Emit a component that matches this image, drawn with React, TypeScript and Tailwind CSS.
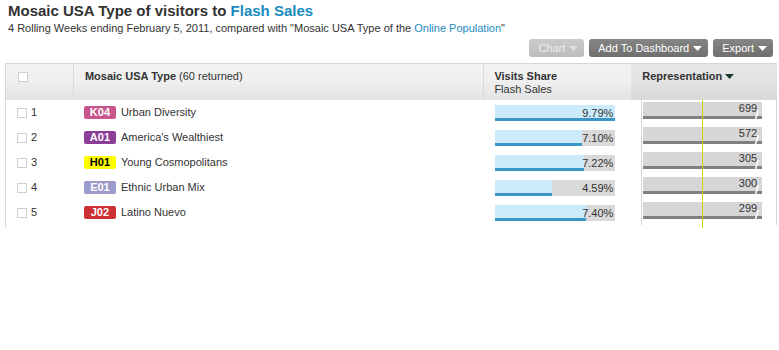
const rows = [
  { n: 1, code: "K04", name: "Urban Diversity", badge: "bg-[#c9568d] text-white", visits: 9.79, rep: 699 },
  { n: 2, code: "A01", name: "America's Wealthiest", badge: "bg-[#8c3d98] text-white", visits: 7.1, rep: 572 },
  { n: 3, code: "H01", name: "Young Cosmopolitans", badge: "bg-[#ffff00] text-black", visits: 7.22, rep: 305 },
  { n: 4, code: "E01", name: "Ethnic Urban Mix", badge: "bg-[#9b9acb] text-white", visits: 4.59, rep: 300 },
  { n: 5, code: "J02", name: "Latino Nuevo", badge: "bg-[#cc2f34] text-white", visits: 7.4, rep: 299 },
];

const maxVisits = 9.79;

function Caret({ className }: { className?: string }) {
  return (
    <svg width="9" height="5" viewBox="0 0 9 5" className={className}>
      <path d="M0 0h9L4.5 5z" fill="currentColor" />
    </svg>
  );
}

function Checkbox() {
  return <span className="inline-block w-[10px] h-[10px] border border-[#cfcfcf] bg-white" />;
}

function Button({ label, disabled }: { label: string; disabled?: boolean }) {
  return (
    <div
      className={
        "h-[18px] pl-[9px] pr-[6px] rounded-[3px] flex items-center gap-[4px] text-[11px] " +
        (disabled
          ? "bg-gradient-to-b from-[#cacaca] to-[#bdbdbd] text-[#ececec]"
          : "bg-gradient-to-b from-[#858585] to-[#6f6f6f] text-white")
      }
    >
      <span>{label}</span>
      <Caret className={disabled ? "text-[#dedede]" : "text-white"} />
    </div>
  );
}

export default function App() {
  return (
    <div className="w-[779px] h-[350px] bg-white text-[#333] font-['Liberation_Sans',Arial,sans-serif]">
      <div className="pl-2 pt-[2px] text-[15px] leading-[18px] font-bold text-[#333]">
        Mosaic USA Type of visitors to <span className="text-[#1a8bc0]">Flash Sales</span>
      </div>
      <div className="pl-2 text-[11px] leading-[14px] mt-[1px]">
        4 Rolling Weeks ending February 5, 2011, compared with "Mosaic USA Type of the{" "}
        <span className="text-[#1a8bc0]">Online Population</span>"
      </div>

      <div className="flex justify-end gap-[5px] pr-[6px] mt-[4px]">
        <Button label="Chart" disabled />
        <Button label="Add To Dashboard" />
        <Button label="Export" />
      </div>

      <div className="ml-[5px] w-[772px] mt-[6px]">
        {/* header */}
        <div className="flex h-[37px] border-t border-l border-[#d6d6d6] text-[11px] leading-[13px]">
          <div className="w-[68px] border-r border-[#dadada] bg-gradient-to-b from-[#f2f2f2] via-[#efefef] to-[#e3e3e3] pl-[12px] pt-[8px]">
            <Checkbox />
          </div>
          <div className="w-[411px] border-r border-[#dadada] bg-gradient-to-b from-[#f2f2f2] via-[#efefef] to-[#e3e3e3] pl-[11px] pt-[6px]">
            <span className="font-bold">Mosaic USA Type</span> (60 returned)
          </div>
          <div className="w-[147px] bg-gradient-to-b from-[#f2f2f2] via-[#efefef] to-[#e3e3e3] pl-[10px] pt-[6px]">
            <div className="font-bold">Visits Share</div>
            <div>Flash Sales</div>
          </div>
          <div className="w-[146px] bg-gradient-to-b from-[#e6e6e6] via-[#e3e3e3] to-[#d9d9d9] pl-[11px] pt-[6px] flex items-start gap-[3px]">
            <span className="font-bold">Representation</span>
            <Caret className="text-[#1d3b2c] mt-[4px]" />
          </div>
        </div>

        {/* rows */}
        <div className="relative border-l border-[#d6d6d6] pb-[3px]">
          {rows.map((r) => (
            <div key={r.n} className="flex h-[25px] text-[11px]">
              <div className="w-[68px] flex items-center pl-[11px] gap-[4px]">
                <Checkbox />
                <span>{r.n}</span>
              </div>
              <div className="w-[411px] flex items-center pl-[10px] gap-[5px]">
                <span
                  className={
                    "w-[32px] h-[13px] rounded-[2px] flex items-center justify-center font-bold text-[11px] leading-none " +
                    r.badge
                  }
                >
                  {r.code}
                </span>
                <span>{r.name}</span>
              </div>
              <div className="w-[147px] pl-[11px] pt-[5px]">
                <div className="relative w-[120px] h-[16px] bg-[#d9d9d9]">
                  <div
                    className="absolute left-0 top-0 h-[13px] bg-[#ccebfa]"
                    style={{ width: (r.visits / maxVisits) * 120 }}
                  />
                  <div
                    className="absolute left-0 bottom-0 h-[3px] bg-[#3a96c6]"
                    style={{ width: (r.visits / maxVisits) * 120 }}
                  />
                  <div className="relative text-right pr-[2px] text-[11px] leading-[14px] pt-[1px]">
                    {r.visits.toFixed(2)}%
                  </div>
                </div>
              </div>
              <div className="w-[146px] pl-[10px]">
                <div className="h-full border-l border-r border-[#d6d6d6] pl-[1px] pt-[2px]">
                  <div className="relative w-[119px] h-[17px] bg-[#d6d6d6]">
                    <div className="absolute left-0 right-0 bottom-0 h-[3px] bg-[#808080]" />
                    <svg className="absolute right-[2px] bottom-0" width="6" height="9" viewBox="0 0 6 9">
                      <path d="M4.5 0L1.5 9" stroke="white" strokeWidth="1.5" />
                    </svg>
                    <div className="relative text-right pr-[5px] text-[11px] leading-[13px]">{r.rep}</div>
                  </div>
                </div>
              </div>
            </div>
          ))}
          <div className="absolute top-0 bottom-0 left-[696px] w-px bg-[#d2d20a]" />
        </div>
      </div>
    </div>
  );
}
